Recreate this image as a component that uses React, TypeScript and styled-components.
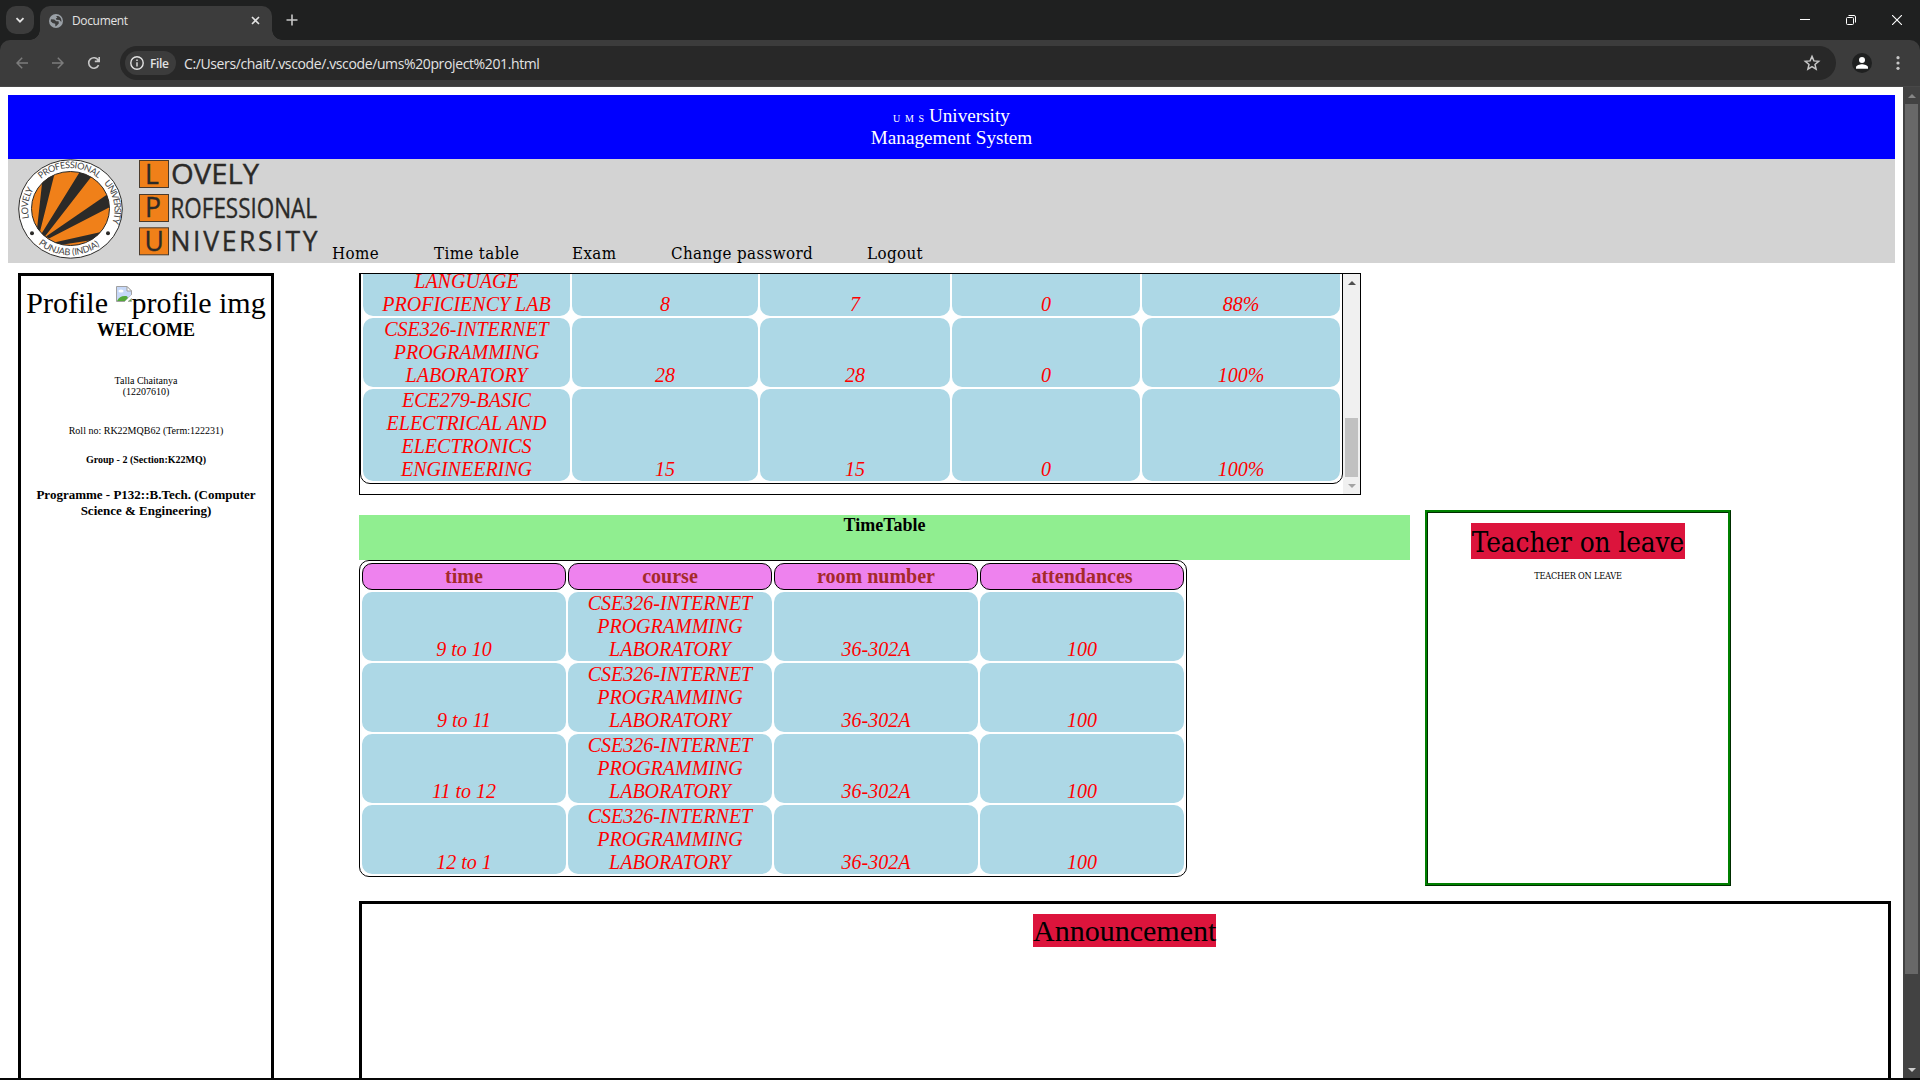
import React from 'react';
import styled, { createGlobalStyle, css } from 'styled-components';

const GlobalStyle = createGlobalStyle`
  html, body { margin: 0; padding: 0; background: #fff; }
  body { font-family: "Liberation Serif", "Times New Roman", serif; color: #000; overflow: hidden; }
  * { box-sizing: border-box; }
`;

const cambria = '"DejaVu Serif Condensed", "DejaVu Serif", serif';

/* ---------- browser chrome ---------- */
const Screen = styled.div`
  width: 1920px;
  height: 1080px;
  display: flex;
  flex-direction: column;
  overflow: hidden;
  border-bottom: 2px solid #060606;
`;

const TabStrip = styled.div`
  height: 40px;
  flex: none;
  background: #1f2020;
  display: flex;
  align-items: flex-start;
  padding: 6px 0 0 6px;
  color: #e3e3e3;
  font-family: "Open Sans", "Noto Sans", sans-serif;
`;

const TabSearch = styled.div`
  width: 28px;
  height: 28px;
  border-radius: 10px;
  background: #3c3c3c;
  display: grid;
  place-items: center;
`;

const Tab = styled.div`
  position: relative;
  margin-left: 6px;
  width: 232px;
  height: 34px;
  border-radius: 10px 10px 0 0;
  background: #3c3c3c;
  display: flex;
  align-items: center;
  padding: 0 12px 5px 9px;
  &::before, &::after {
    content: '';
    position: absolute;
    bottom: 0;
    width: 10px;
    height: 10px;
  }
  &::before { left: -10px; background: radial-gradient(circle at 0 0, transparent 9.5px, #3c3c3c 10px); }
  &::after { right: -10px; background: radial-gradient(circle at 100% 0, transparent 9.5px, #3c3c3c 10px); }
`;

const TabTitle = styled.span`
  flex: 1;
  margin-left: 9px;
  font-size: 12px;
  line-height: 16px;
  letter-spacing: -0.35px;
`;

const NewTab = styled.div`
  margin: 7px 0 0 13px;
  width: 14px;
  height: 14px;
  display: flex;
`;

const WindowButtons = styled.div`
  margin-left: auto;
  display: flex;
  height: 28px;
`;

const WindowButton = styled.div`
  width: 46px;
  display: grid;
  place-items: center;
`;

const ToolbarBack = styled.div`
  flex: none;
  height: 47px;
  background: #1f2020;
`;

const Toolbar = styled.div`
  height: 47px;
  background: #3c3c3c;
  border-radius: 10px 10px 0 0;
  border-bottom: 1px solid #484848;
  display: flex;
  align-items: center;
  font-family: "Open Sans", "Noto Sans", sans-serif;
  color: #e3e3e3;
  padding-left: 4px;
`;

const ToolButton = styled.div`
  flex: none;
  width: 36px;
  height: 36px;
  display: grid;
  place-items: center;
`;

const MenuButton = styled.div`
  flex: none;
  width: 28px;
  margin-left: 12px;
  display: grid;
  place-items: center;
`;

const AddressBar = styled.div`
  flex: none;
  margin-left: 8px;
  width: 1716px;
  height: 34px;
  border-radius: 17px;
  background: #282828;
  display: flex;
  align-items: center;
  padding: 0 14px 0 5px;
`;

const FileChip = styled.div`
  height: 24px;
  width: 51px;
  border-radius: 12px;
  background: #3c3c3c;
  display: flex;
  align-items: center;
  padding-left: 5px;
  gap: 6px;
  font-size: 12px;
  font-weight: 600;
  letter-spacing: -0.4px;
`;

const Url = styled.span`
  flex: 1;
  margin-left: 8px;
  font-size: 14px;
  letter-spacing: -0.38px;
`;

const Avatar = styled.div`
  flex: none;
  margin-left: 16px;
  width: 20px;
  height: 20px;
  border-radius: 50%;
  background: #1f2020;
`;

/* ---------- document ---------- */
const Viewport = styled.div`
  flex: 1;
  min-height: 0;
  display: flex;
`;

const Page = styled.main`
  width: 1903px;
  padding: 8px 8px 0;
  overflow: hidden;
`;

const PageScroll = styled.div`
  width: 17px;
  background: #424242;
  display: flex;
  flex-direction: column;
  align-items: center;
`;

const ArrowSlot = styled.div`
  width: 17px;
  height: 17px;
  display: grid;
  place-items: center;
`;

const PageThumb = styled.div`
  width: 13px;
  height: 870px;
  background: #686868;
  margin-bottom: auto;
`;

const Banner = styled.header`
  height: 64px;
  background: blue;
  color: #fff;
  text-align: center;
  font-size: 19.2px;
  line-height: 22px;
  padding-top: 10px;
`;

const Ums = styled.span`
  font-size: 10px;
  line-height: 1;
  letter-spacing: 1.1px;
`;

const NavBar = styled.nav`
  height: 104px;
  background: lightgray;
  display: flex;
  align-items: flex-end;
  padding-left: 8px;
`;

const Links = styled.div`
  display: flex;
  gap: 54px;
  margin-left: 14px;
`;

const NavLink = styled.a<{ $w: number }>`
  width: ${p => p.$w}px;
  white-space: nowrap;
  font-family: ${cambria};
  font-size: 16.8px;
  line-height: 19px;
  letter-spacing: 0.38px;
`;

const Columns = styled.div`
  display: flex;
  padding: 10px 4px 0 10px;
`;

const Profile = styled.aside`
  width: 256px;
  height: 900px;
  border: 3px solid #000;
  padding-top: 10px;
  text-align: center;
`;

const ProfileTitle = styled.div`
  font-size: 30px;
  line-height: 34px;
  white-space: nowrap;
  display: flex;
  justify-content: center;
`;

const BrokenImage = styled.span`
  margin-left: 7.5px;
  display: flex;
  svg { flex: none; }
`;

const Line = styled.div<{ $size: number; $lh: number; $top?: number; $bold?: boolean }>`
  font-size: ${p => p.$size}px;
  line-height: ${p => p.$lh}px;
  margin-top: ${p => p.$top ?? 0}px;
  font-weight: ${p => (p.$bold ? 700 : 400)};
`;

const Main = styled.section`
  margin-left: 85px;
  width: 1532px;
`;

const AttendancePanel = styled.div`
  width: 1002px;
  height: 222px;
  border: 1px solid #000;
  display: flex;
`;

const AttendanceView = styled.div`
  width: 983px;
  padding-bottom: 10px;
  overflow: hidden;
  display: flex;
  flex-direction: column;
  justify-content: flex-end;
`;

const PanelScroll = styled.div`
  width: 17px;
  background: #f0f0f0;
  display: flex;
  flex-direction: column;
  align-items: center;
`;

const PanelThumb = styled.div`
  width: 13px;
  height: 59px;
  margin-top: auto;
  background: #c1c1c1;
`;

const Table = styled.table<{ $w: number }>`
  width: ${p => p.$w}px;
  flex: none;
  table-layout: fixed;
  border: 1px solid #000;
  border-radius: 10px;
  border-collapse: separate;
  border-spacing: 2px;
  font-size: 20px;
  line-height: 23px;
  text-align: center;
`;

const rounded = css`
  border-radius: 10px;
`;

const Th = styled.th`
  ${rounded}
  padding: 1px;
  border: 1px solid #000;
  background: violet;
  color: brown;
`;

const Td = styled.td<{ $tall?: boolean }>`
  ${rounded}
  padding: ${p => (p.$tall ? '23px 0 0' : '0')};
  background: lightblue;
  color: red;
  font-style: italic;
  vertical-align: bottom;
`;

const Middle = styled.div`
  display: flex;
  align-items: flex-start;
  padding-top: 15px;
`;

const TimeTable = styled.div`
  width: 1051px;
  margin-top: 5px;
`;

const TimeTableTitle = styled.div`
  height: 45px;
  background: lightgreen;
  text-align: center;
  font-weight: 700;
  font-size: 18px;
  line-height: 20px;
`;

const LeaveBox = styled.div`
  margin-left: 15px;
  width: 306px;
  height: 376px;
  border: 3px ridge green;
  padding-top: 10px;
  display: flex;
  flex-direction: column;
  align-items: center;
  font-family: ${cambria};
`;

const LeaveTitle = styled.div`
  width: 214px;
  height: 36px;
  background: crimson;
  font-size: 27.6px;
  line-height: 39px;
  letter-spacing: -0.05px;
  text-align: center;
  white-space: nowrap;
`;

const LeaveText = styled.div`
  margin-top: 11px;
  font-size: 9.1px;
  line-height: 12px;
  letter-spacing: -0.2px;
`;

const Announcement = styled.div`
  margin-top: 15px;
  height: 260px;
  border: 3px solid #000;
  padding: 10px 1px 0 0;
  display: flex;
  justify-content: center;
  align-items: flex-start;
`;

const AnnouncementTitle = styled.div`
  width: 183px;
  height: 33px;
  background: crimson;
  font-size: 30px;
  line-height: 33px;
`;

const Logo = () => (
  <svg width="302" height="104" viewBox="16 159 302 104" overflow="visible">
    <defs>
      <clipPath id="disc"><ellipse cx="70.5" cy="208.5" rx="39" ry="37" /></clipPath>
      <path id="arcLeft" d="M 29.6 220 A 41.8 39.8 0 0 1 45 177" />
      <path id="arcMid" d="M 40.4 179.8 A 42 40.2 0 0 1 99.6 179.8" />
      <path id="arcRight" d="M 101.5 181 A 42 40.2 0 0 1 111 226" />
      <path id="arcBottom" d="M 36 242 A 48.6 46 0 0 0 105 241" />
    </defs>
    <ellipse cx="70.5" cy="209" rx="51.8" ry="49.2" fill="#fff" stroke="#2b2a28" strokeWidth="1" />
    <g clipPath="url(#disc)">
      <rect x="30" y="170" width="82" height="80" fill="#f08019" />
      <path d="M43.5 170 L55.5 170 L40 231.5 L37 229 Z M80 171.5 L91.5 176.5 L44.5 237 L41 234.5 Z M112 191 L112 206 L49 238.5 L46 236.5 Z M112 229.5 L96 239.5 L60 245 L54 242.5 Z" fill="#2b2a28" />
    </g>
    <ellipse cx="70.5" cy="208.5" rx="39" ry="37" fill="none" stroke="#2b2a28" strokeWidth="1" />
    <circle cx="32" cy="233.3" r="2" fill="#2b2a28" />
    <circle cx="108" cy="233.3" r="2" fill="#2b2a28" />
    <g fontFamily="Lato, sans-serif" fontSize="9.2" fill="#444">
      <text><textPath href="#arcLeft" startOffset="2" textLength="30">LOVELY</textPath></text>
      <text><textPath href="#arcMid" startOffset="1" textLength="62">PROFESSIONAL</textPath></text>
      <text><textPath href="#arcRight" startOffset="3" textLength="43">UNIVERSITY</textPath></text>
      <text><textPath href="#arcBottom" startOffset="3" textLength="66">PUNJAB (INDIA)</textPath></text>
    </g>
    <g fill="#f08019" stroke="#4a3a2c" strokeWidth="1">
      <rect x="139.5" y="160.5" width="29" height="27" />
      <rect x="139.5" y="194.5" width="29" height="27" />
      <rect x="139.5" y="227.8" width="29" height="27" />
    </g>
    <g fontFamily='"Open Sans", sans-serif' fontSize="26.5" fill="#2b2a28" stroke="#2b2a28" strokeWidth="0.35">
      <text x="145" y="183.5">L</text>
      <text x="145" y="217.3">P</text>
      <text x="144.5" y="250.8">U</text>
      <text x="171" y="184" textLength="88" lengthAdjust="spacingAndGlyphs">OVELY</text>
      <text x="170.5" y="217.5" textLength="146.5" lengthAdjust="spacingAndGlyphs">ROFESSIONAL</text>
      <text x="170.5" y="251.2" textLength="147" lengthAdjust="spacing">NIVERSITY</text>
    </g>
  </svg>
);

const Arrow = ({ dir, color }: { dir: 'up' | 'down'; color: string }) => (
  <svg width="8" height="4" viewBox="0 0 8 4">
    <path d={dir === 'up' ? 'M0 4 L4 0 L8 4 Z' : 'M0 0 L4 4 L8 0 Z'} fill={color} />
  </svg>
);

const attendance: string[][] = [
  ['LANGUAGE|PROFICIENCY LAB', '8', '7', '0', '88%'],
  ['CSE326-INTERNET|PROGRAMMING|LABORATORY', '28', '28', '0', '100%'],
  ['ECE279-BASIC|ELECTRICAL AND|ELECTRONICS|ENGINEERING', '15', '15', '0', '100%'],
];
const slots = ['9 to 10', '9 to 11', '11 to 12', '12 to 1'];

const Cell = ({ text, tall }: { text: string; tall?: boolean }) => (
  <Td $tall={tall}>
    {text.split('|').map((t, i) => (
      <React.Fragment key={i}>{i > 0 && <br />}{t}</React.Fragment>
    ))}
  </Td>
);

const links: [string, number][] = [
  ['Home', 48], ['Time table', 84], ['Exam', 45], ['Change password', 142], ['Logout', 60],
];

export default function App() {
  return (
    <Screen>
      <GlobalStyle />
      <TabStrip>
        <TabSearch>
          <svg width="10" height="10" viewBox="0 0 10 10" fill="none" stroke="#e3e3e3" strokeWidth="1.8"><path d="M1.5 3.2 L5 6.7 L8.5 3.2" /></svg>
        </TabSearch>
        <Tab>
          <svg width="14" height="14" viewBox="0 0 14 14">
            <circle cx="7" cy="7" r="7" fill="#9aa0a6" />
            <path d="M2 5.2 L5.3 5.6 L7.2 7.3 L9.6 7.2 L9.8 9.4 L7.6 11.8 L6.4 12.4 L6.2 9.8 L3.6 9 L1.7 7.2 Z M7 2 L8.4 3.6 L6.8 4.6 L7.4 5.8 L10.5 6 L12.3 8 A5.6 5.6 0 0 0 9.2 1.9 Z" fill="#3c3c3c" />
          </svg>
          <TabTitle>Document</TabTitle>
          <svg width="9" height="9" viewBox="0 0 9 9" stroke="#e3e3e3" strokeWidth="1.6"><path d="M1 1 L8 8 M8 1 L1 8" /></svg>
        </Tab>
        <NewTab>
          <svg width="14" height="14" viewBox="0 0 14 14" stroke="#c7c7c7" strokeWidth="1.6"><path d="M7 1.5 V12.5 M1.5 7 H12.5" /></svg>
        </NewTab>
        <WindowButtons>
          <WindowButton><svg width="10" height="10"><path d="M0 4.5 H10" stroke="#fff" /></svg></WindowButton>
          <WindowButton>
            <svg width="10" height="10" fill="none" stroke="#fff"><rect x=".5" y="2.5" width="7" height="7" rx="1" /><path d="M2.5 .5 H8 Q9.5 .5 9.5 2 V7.5" /></svg>
          </WindowButton>
          <WindowButton><svg width="10" height="10" stroke="#fff" strokeWidth="1.1"><path d="M0 0 L10 10 M10 0 L0 10" /></svg></WindowButton>
        </WindowButtons>
      </TabStrip>
      <ToolbarBack>
        <Toolbar>
          <ToolButton><svg width="12" height="12" fill="none" stroke="#7c7c7c" strokeWidth="1.5"><path d="M12 6 H1.2 M6.2 .8 L1 6 L6.2 11.2" /></svg></ToolButton>
          <ToolButton><svg width="12" height="12" fill="none" stroke="#7c7c7c" strokeWidth="1.5"><path d="M0 6 H10.8 M5.8 .8 L11 6 L5.8 11.2" /></svg></ToolButton>
          <ToolButton>
            <svg width="14" height="14" fill="none" stroke="#c7c7c7" strokeWidth="1.6"><path d="M11.6 9.2 A5.2 5.2 0 1 1 11.3 4.2 M12.2 1 V5.4 H7.8" /></svg>
          </ToolButton>
          <AddressBar>
            <FileChip>
              <svg width="14" height="14" fill="none" stroke="#e3e3e3" strokeWidth="1.4"><circle cx="7" cy="7" r="6.2" /><path d="M7 6.2 V10.4 M7 3.6 V5" /></svg>
              File
            </FileChip>
            <Url>C:/Users/chait/.vscode/.vscode/ums%20project%201.html</Url>
            <svg width="20" height="20" viewBox="0 0 20 20" fill="none" stroke="#c7c7c7" strokeWidth="1.5">
              <path d="M10 3.4 L11.9 7.9 L16.7 8.3 L13 11.5 L14.1 16.2 L10 13.7 L5.9 16.2 L7 11.5 L3.3 8.3 L8.1 7.9 Z" />
            </svg>
          </AddressBar>
          <Avatar>
            <svg width="20" height="20" fill="#fff"><circle cx="10" cy="7" r="3" /><path d="M4 15.8 V14.4 C4 12 8 11.2 10 11.2 S16 12 16 14.4 V15.8 Z" /></svg>
          </Avatar>
          <MenuButton><svg width="4" height="14" fill="#c7c7c7"><circle cx="2" cy="1.7" r="1.6" /><circle cx="2" cy="7" r="1.6" /><circle cx="2" cy="12.3" r="1.6" /></svg></MenuButton>
        </Toolbar>
      </ToolbarBack>
      <Viewport>
        <Page>
          <Banner>
            <Ums>U M S </Ums>University<br />Management System
          </Banner>
          <NavBar>
            <Logo />
            <Links>
              {links.map(([t, w]) => <NavLink key={t} $w={w}>{t}</NavLink>)}
            </Links>
          </NavBar>
          <Columns>
            <Profile>
              <ProfileTitle>
                Profile
                <BrokenImage>
                  <svg width="16" height="16">
                    <path d="M.5 .5 H11 L15.5 5 V9 L9 15.5 H.5 Z" fill="#c6d8f8" stroke="#a0a0a0" />
                    <path d="M11 .5 V5 H15.5 Z" fill="#fff" stroke="#a0a0a0" />
                    <ellipse cx="5" cy="5" rx="2.6" ry="1.5" fill="#fff" />
                    <path d="M1 15 C3 11 6 9.5 11 10.2 L12 12 L9 15 Z" fill="#54a83a" />
                    <path d="M8.5 16 L16 8.5 V11 L11 16 Z" fill="#fff" />
                    <path d="M12 15.5 H15.5 V12.5 Z" fill="#54a83a" stroke="#a0a0a0" strokeWidth=".6" />
                  </svg>
                  profile img
                </BrokenImage>
              </ProfileTitle>
              <Line $size={18} $lh={20} $bold>WELCOME</Line>
              <Line $size={10} $lh={11} $top={35}>Talla Chaitanya<br />(12207610)</Line>
              <Line $size={10} $lh={11} $top={28}>Roll no: RK22MQB62 (Term:122231)</Line>
              <Line $size={10} $lh={11} $top={18} $bold>Group - 2 (Section:K22MQ)</Line>
              <Line $size={13} $lh={16} $top={22} $bold>Programme - P132::B.Tech. (Computer<br />Science &amp; Engineering)</Line>
            </Profile>
            <Main>
              <AttendancePanel>
                <AttendanceView>
                  <Table $w={983}>
                    <colgroup>
                      {[207, 186, 190, 188, 198].map((w, i) => <col key={i} width={w} />)}
                    </colgroup>
                    <tbody>
                      {attendance.map((row, r) => (
                        <tr key={r}>
                          {row.map((c, i) => <Cell key={i} text={c} tall={r === 0} />)}
                        </tr>
                      ))}
                    </tbody>
                  </Table>
                </AttendanceView>
                <PanelScroll>
                  <ArrowSlot><Arrow dir="up" color="#505050" /></ArrowSlot>
                  <PanelThumb />
                  <ArrowSlot><Arrow dir="down" color="#a3a3a3" /></ArrowSlot>
                </PanelScroll>
              </AttendancePanel>
              <Middle>
                <TimeTable>
                  <TimeTableTitle>TimeTable</TimeTableTitle>
                  <Table $w={828}>
                    <thead>
                      <tr><Th>time</Th><Th>course</Th><Th>room number</Th><Th>attendances</Th></tr>
                    </thead>
                    <tbody>
                      {slots.map(s => (
                        <tr key={s}>
                          <Cell text={s} />
                          <Cell text="CSE326-INTERNET|PROGRAMMING|LABORATORY" />
                          <Cell text="36-302A" />
                          <Cell text="100" />
                        </tr>
                      ))}
                    </tbody>
                  </Table>
                </TimeTable>
                <LeaveBox>
                  <LeaveTitle>Teacher on leave</LeaveTitle>
                  <LeaveText>TEACHER ON LEAVE</LeaveText>
                </LeaveBox>
              </Middle>
              <Announcement>
                <AnnouncementTitle>Announcement</AnnouncementTitle>
              </Announcement>
            </Main>
          </Columns>
        </Page>
        <PageScroll>
          <ArrowSlot><Arrow dir="up" color="#868686" /></ArrowSlot>
          <PageThumb />
          <ArrowSlot><Arrow dir="down" color="#cdcdcd" /></ArrowSlot>
        </PageScroll>
      </Viewport>
    </Screen>
  );
}
